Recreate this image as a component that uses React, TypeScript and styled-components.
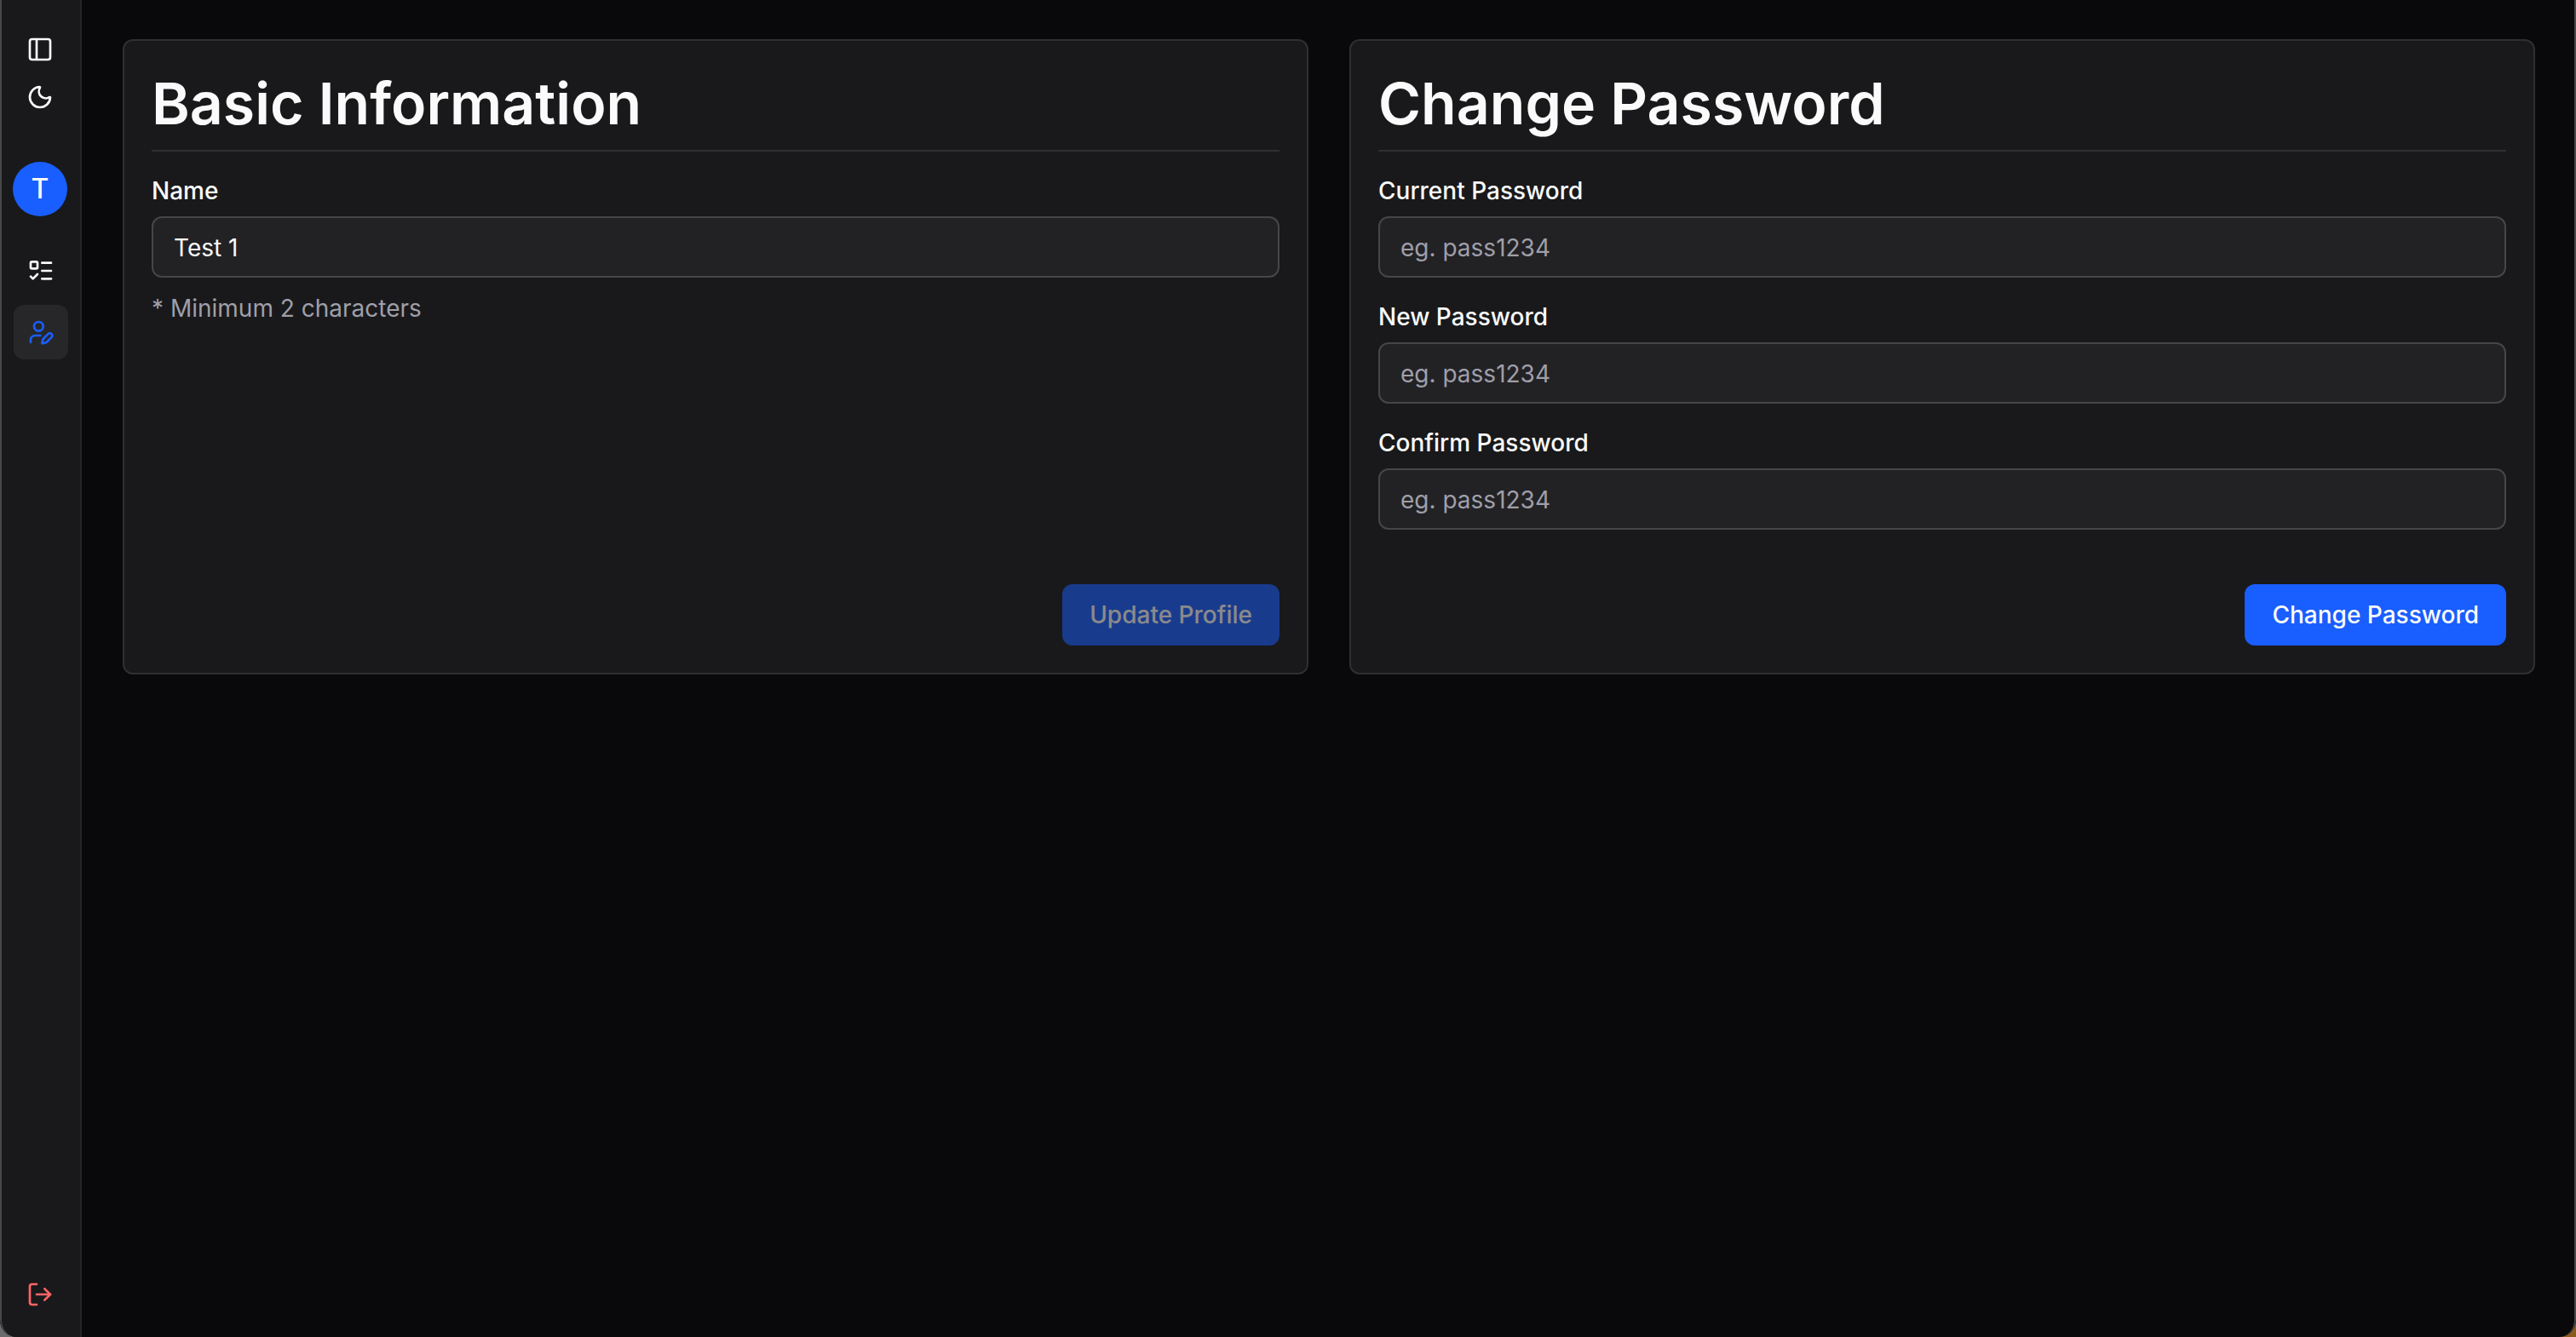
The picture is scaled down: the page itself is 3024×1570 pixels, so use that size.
import React, { useState } from "react";
import styled, { createGlobalStyle } from "styled-components";
import { ListTodo, LogOut, Moon, PanelLeft, UserPen } from "lucide-react";

const color = {
  background: "#09090b",
  surface: "#19191b",
  raised: "#222225",
  active: "#27272a",
  border: "#2f2f31",
  inputBorder: "#464649",
  text: "#fafafa",
  muted: "#9f9fa9",
  primary: "#195efe",
  danger: "#ff6467",
};

const GlobalStyle = createGlobalStyle`
  *, *::before, *::after { box-sizing: border-box; }
  html { background: linear-gradient(90deg, #6b6b6b, #8a5a1c); }
  body {
    margin: 0;
    color: ${color.text};
    font-family: Inter, "Liberation Sans", sans-serif;
    font-size: 28px;
    line-height: 40px;
  }
  button, input { font: inherit; color: inherit; }
`;

const Frame = styled.div`
  position: relative;
  display: flex;
  min-height: 100vh;
  overflow: hidden;
  background: ${color.background};
  border-radius: 0 0 20px 20px;

  &::after {
    content: "";
    position: absolute;
    inset: 0;
    border: 2px solid #474749;
    border-top: 0;
    border-bottom: 0;
    border-radius: inherit;
    pointer-events: none;
  }
`;

const Sidebar = styled.aside`
  display: flex;
  flex-direction: column;
  align-items: center;
  flex: none;
  width: 96px;
  padding: 30px 0 22px;
  background: ${color.surface};
  border-right: 2px solid #242427;
`;

const IconButton = styled.button<{ $danger?: boolean }>`
  display: grid;
  place-items: center;
  width: 56px;
  height: 56px;
  padding: 0;
  border: 0;
  border-radius: 12px;
  background: none;
  color: ${(p) => (p.$danger ? color.danger : color.text)};
  cursor: pointer;
`;

const Avatar = styled.div`
  display: grid;
  place-items: center;
  width: 64px;
  height: 64px;
  margin-top: 48px;
  border-radius: 50%;
  background: ${color.primary};
  font-size: 32px;
  font-weight: 500;
`;

const Nav = styled.nav`
  display: flex;
  flex-direction: column;
  gap: 8px;
  width: 100%;
  margin: 32px 0 auto;
  padding-left: 16px;
`;

const NavLink = styled.a<{ $active?: boolean }>`
  display: grid;
  place-items: center;
  width: 64px;
  height: 64px;
  border-radius: 12px;
  background: ${(p) => (p.$active ? color.active : "none")};
  color: ${(p) => (p.$active ? color.primary : color.text)};
`;

const Main = styled.main`
  display: grid;
  grid-template-columns: 1fr 1fr;
  align-content: start;
  gap: 48px;
  flex: 1;
  padding: 46px 48px 48px;
`;

const Card = styled.form`
  display: flex;
  flex-direction: column;
  padding: 32px;
  background: ${color.surface};
  border: 2px solid ${color.border};
  border-radius: 12px;
`;

const Title = styled.h1`
  margin: 0 0 32px;
  padding-bottom: 14px;
  border-bottom: 2px solid ${color.border};
  font-size: 68px;
  line-height: 82px;
  font-weight: 600;
`;

const Fields = styled.div`
  display: flex;
  flex-direction: column;
  gap: 32px;
  margin-bottom: 64px;
`;

const FieldGroup = styled.div`
  display: flex;
  flex-direction: column;
  gap: 16px;
`;

const Label = styled.label`
  font-weight: 500;
  line-height: 28px;
`;

const Input = styled.input`
  width: 100%;
  height: 72px;
  padding: 2px 24px 0;
  border: 2px solid ${color.inputBorder};
  border-radius: 12px;
  background: ${color.raised};
  outline: 0;

  &::placeholder { color: ${color.muted}; opacity: 1; }
`;

const Hint = styled.p`
  margin: 0;
  color: ${color.muted};
`;

const SubmitButton = styled.button`
  align-self: flex-end;
  height: 72px;
  margin-top: auto;
  padding: 0 32px;
  border: 0;
  border-radius: 12px;
  background: ${color.primary};
  font-weight: 500;
  cursor: pointer;

  &:disabled { opacity: 0.5; cursor: default; }
`;

type FieldProps = {
  id: string;
  label: string;
  hint?: string;
} & React.InputHTMLAttributes<HTMLInputElement>;

function Field({ id, label, hint, ...input }: FieldProps) {
  return (
    <FieldGroup>
      <Label htmlFor={id}>{label}</Label>
      <Input id={id} {...input} />
      {hint && <Hint>{hint}</Hint>}
    </FieldGroup>
  );
}

const SAVED_NAME = "Test 1";

export default function App() {
  const [name, setName] = useState(SAVED_NAME);
  const stop = (e: React.FormEvent) => e.preventDefault();

  return (
    <>
      <GlobalStyle />
      <Frame>
        <Sidebar>
          <IconButton type="button" aria-label="Toggle sidebar">
            <PanelLeft size={32} />
          </IconButton>
          <IconButton type="button" aria-label="Toggle theme">
            <Moon size={32} />
          </IconButton>
          <Avatar>T</Avatar>
          <Nav>
            <NavLink href="#tasks" aria-label="Tasks">
              <ListTodo size={32} />
            </NavLink>
            <NavLink href="#profile" aria-label="Profile" $active>
              <UserPen size={32} />
            </NavLink>
          </Nav>
          <IconButton type="button" aria-label="Log out" $danger>
            <LogOut size={32} />
          </IconButton>
        </Sidebar>
        <Main>
          <Card onSubmit={stop}>
            <Title>Basic Information</Title>
            <Fields>
              <Field
                id="name"
                label="Name"
                hint="* Minimum 2 characters"
                value={name}
                onChange={(e) => setName(e.target.value)}
              />
            </Fields>
            <SubmitButton disabled={name === SAVED_NAME}>Update Profile</SubmitButton>
          </Card>
          <Card onSubmit={stop}>
            <Title>Change Password</Title>
            <Fields>
              <Field id="current" type="password" label="Current Password" placeholder="eg. pass1234" />
              <Field id="new" type="password" label="New Password" placeholder="eg. pass1234" />
              <Field id="confirm" type="password" label="Confirm Password" placeholder="eg. pass1234" />
            </Fields>
            <SubmitButton>Change Password</SubmitButton>
          </Card>
        </Main>
      </Frame>
    </>
  );
}
